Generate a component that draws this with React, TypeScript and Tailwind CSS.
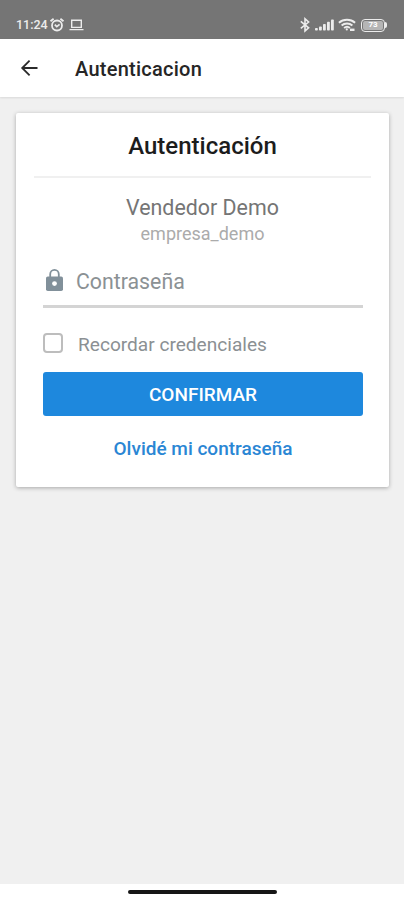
import type { ReactNode } from "react";

const StatusBar = () => {
  return (
    <div className="flex h-[39px] shrink-0 items-start justify-between bg-[#757575] pl-[16px] pr-[17px] pt-[17px] text-[#ececec]">
      <div className="flex h-[16px] items-center">
        <span className="w-[32px] whitespace-nowrap text-[12.5px] font-medium leading-[16px]">11:24</span>
        <svg className="ml-[1px] h-[16px] w-[16px]" viewBox="0 0 16 16" fill="none" stroke="currentColor" strokeWidth="1.8">
          <circle cx="8" cy="8.5" r="5" />
          <path d="M1.5 4.2 4.6 1.8M14.5 4.2 11.4 1.8M5.8 7.6l2 2 2.8-2.2" />
        </svg>
        <svg className="ml-[4px] h-[16px] w-[15px]" viewBox="0 0 15 16" fill="none" stroke="currentColor" strokeWidth="1.4">
          <path d="M2.7 3.2h9.6v7.2H2.7zM.5 12.6h14" />
        </svg>
      </div>
      <div className="flex h-[16px] items-center">
        <svg className="h-[16px] w-[10px]" viewBox="0 0 10 16" fill="none" stroke="currentColor" strokeWidth="1.6">
          <path d="M.8 4.4 8.6 10.8 5 14V1.8L8.6 5 .8 11.4" />
        </svg>
        <svg className="ml-[5px] h-[16px] w-[19px]" viewBox="0 0 19 16" fill="currentColor">
          <rect x="0" y="11" width="2.8" height="2.6" rx=".8" />
          <rect x="4" y="9.4" width="2.8" height="4.2" rx=".8" />
          <rect x="8" y="7" width="2.8" height="6.6" rx=".8" />
          <rect x="12" y="4.8" width="2.8" height="8.8" rx=".8" />
          <rect x="16" y="2.4" width="2.8" height="11.2" rx=".8" />
        </svg>
        <svg className="ml-[4px] h-[16px] w-[18px]" viewBox="0 0 18 16" fill="none" stroke="currentColor" strokeWidth="1.9">
          <path d="M.9 5.7c4.5-4 11.7-4 16.2 0M3.6 8.5c3-2.7 7.8-2.7 10.8 0M6.1 11c1.7-1.5 4.1-1.5 5.8 0" />
          <circle cx="8.8" cy="12.4" r="1.1" fill="currentColor" stroke="none" />
          <path d="M12 12.8h4.5" strokeWidth="2.4" />
        </svg>
        <div className="ml-[5px] flex items-center">
          <div className="flex h-[13px] w-[24px] items-center justify-center rounded-[4px] border-[1.5px] border-[#ececec] p-[1px]">
            <span className="flex h-full w-full items-center justify-center rounded-[2px] bg-[#b5b5b5] text-[8px] font-bold leading-none text-white">
              73
            </span>
          </div>
          <div className="h-[6px] w-[2px] rounded-r bg-[#ececec]" />
        </div>
      </div>
    </div>
  );
};

const Header = () => {
  return (
    <header className="z-10 flex h-[58px] shrink-0 items-center bg-white pl-[20px] shadow-[0_1px_2px_rgba(0,0,0,0.1)]">
      <svg className="h-[18px] w-[18px]" viewBox="0 0 18 18" fill="none" stroke="#2b2b2b" strokeWidth="1.8">
        <path d="M17.5 9H2.2M9.6 1.6 2.2 9l7.4 7.4" />
      </svg>
      <h1 className="ml-[37px] mt-[2px] text-[20px] font-medium leading-[24px] tracking-[0.25px] text-[#262626]">
        Autenticacion
      </h1>
    </header>
  );
};

const Card = ({ children }: { children: ReactNode }) => {
  return (
    <div className="flex h-[374px] flex-col rounded-[2px] bg-white px-[18px] shadow-[0_1px_4px_rgba(0,0,0,0.3)]">
      {children}
    </div>
  );
};

const LoginForm = () => {
  return (
    <div className="flex flex-col pl-[9px] pr-[8px]">
      <div className="flex h-[50px] items-center pl-[3px]">
        <svg className="h-[22px] w-[17px]" viewBox="0 0 17 22" fill="none">
          <path d="M4.2 8V5.2a4.3 4.3 0 0 1 8.6 0V8" stroke="#81909a" strokeWidth="1.8" />
          <rect x="0" y="7.5" width="17" height="14.5" rx="1.8" fill="#81909a" />
          <circle cx="8.5" cy="14.6" r="2.4" fill="white" />
        </svg>
        <label className="ml-[13px] mt-[3px] text-[21.3px] leading-[26px] text-[#8b9194]">Contraseña</label>
      </div>
      <div className="h-[3px] bg-[#d4d4d4]" />
      <div className="mt-[23px] flex h-[24px] items-center">
        <span className="h-[20px] w-[20px] rounded-[4px] border-2 border-[#bdbdbd]" />
        <span className="ml-[15px] mt-[3px] text-[19.1px] leading-[24px] text-[#8b9093]">Recordar credenciales</span>
      </div>
      <button className="mt-[17px] h-[44px] rounded-[3px] bg-[#1e88dd] pt-[2px] text-[19px] font-medium text-white">
        CONFIRMAR
      </button>
      <a className="mt-[21px] text-center text-[19px] font-medium leading-[24px] text-[#2a86d4]">
        Olvidé mi contraseña
      </a>
    </div>
  );
};

export default function App() {
  return (
    <div className="flex h-[900px] w-[404px] flex-col overflow-hidden bg-[#f0f0f0] font-['Roboto',sans-serif]">
      <StatusBar />
      <Header />
      <main className="flex-1 pl-[16px] pr-[15px] pt-[16px]">
        <Card>
          <h2 className="h-[63px] pt-[18px] text-center text-[24px] font-medium leading-[30px] text-[#1c1c1c]">
            Autenticación
          </h2>
          <div className="h-[2px] bg-[#f0f0f0]" />
          <div className="mt-[16px] text-center text-[21.4px] leading-[28px] text-[#757575]">Vendedor Demo</div>
          <div className="mb-[9px] text-center text-[18px] leading-[24px] text-[#ababab]">empresa_demo</div>
          <LoginForm />
        </Card>
      </main>
      <div className="flex h-[16px] shrink-0 justify-center bg-white pt-[6px]">
        <div className="h-[4px] w-[149px] rounded-full bg-[#161616]" />
      </div>
    </div>
  );
}
